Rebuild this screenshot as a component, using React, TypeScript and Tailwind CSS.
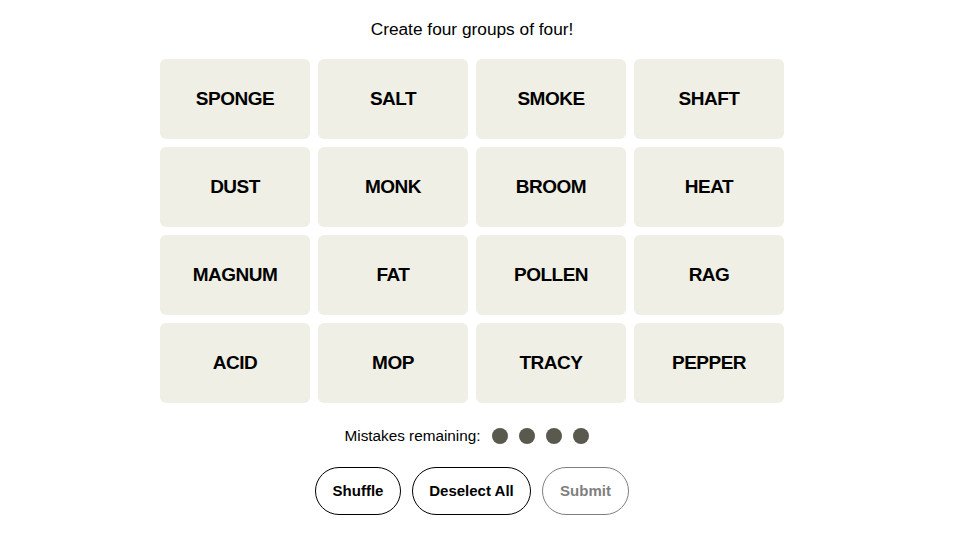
import React from 'react';

const WORDS = [
  'SPONGE', 'SALT', 'SMOKE', 'SHAFT',
  'DUST', 'MONK', 'BROOM', 'HEAT',
  'MAGNUM', 'FAT', 'POLLEN', 'RAG',
  'ACID', 'MOP', 'TRACY', 'PEPPER',
];

const App: React.FC = () => {
  return (
    <div className="w-[944px] bg-white text-black font-['Liberation_Sans',Arial,sans-serif]">
      <div className="flex flex-col items-center pt-[18px]">
        {/* Header */}
        <p className="text-[17.3px] leading-5 mt-[1px]">Create four groups of four!</p>

        {/* Board */}
        <div className="mt-[20px] grid grid-cols-4 gap-2 w-[624px]">
          {WORDS.map((w) => (
            <button
              key={w}
              className="h-20 rounded-md bg-[#efefe6] flex items-center justify-center text-[19px] font-bold tracking-[-0.5px]"
            >
              {w}
            </button>
          ))}
        </div>

        {/* Mistakes */}
        <div className="mt-[23px] flex items-center h-5 pr-[11px]">
          <span className="text-[15.3px]">Mistakes remaining:</span>
          <div className="ml-[11px] flex gap-[11px]">
            <span className="w-4 h-4 rounded-full bg-[#5a594e]" />
            <span className="w-4 h-4 rounded-full bg-[#5a594e]" />
            <span className="w-4 h-4 rounded-full bg-[#5a594e]" />
            <span className="w-4 h-4 rounded-full bg-[#5a594e]" />
          </div>
        </div>

        {/* Controls */}
        <div className="mt-[21px] flex gap-[11px]">
          <button className="h-12 w-[86px] rounded-full border border-black text-[15px] font-bold">Shuffle</button>
          <button className="h-12 w-[119px] rounded-full border border-black text-[15px] font-bold">Deselect All</button>
          <button className="h-12 w-[87px] rounded-full border border-[#7f7f7f] text-[#7f7f7f] text-[15px] font-bold">Submit</button>
        </div>
      </div>
    </div>
  );
};

export default App;
